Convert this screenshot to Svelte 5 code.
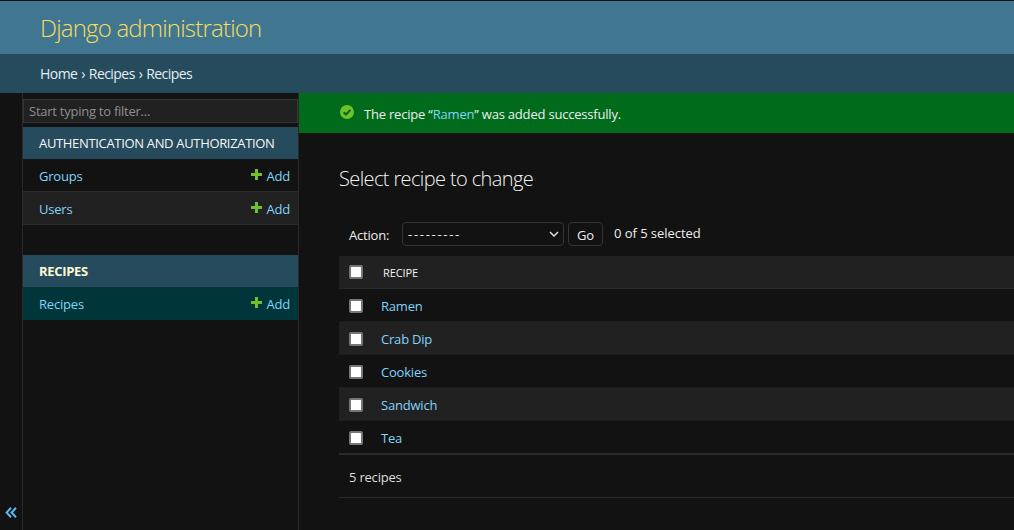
<script>
  const recipes = ['Ramen', 'Crab Dip', 'Cookies', 'Sandwich', 'Tea'];
</script>

<div class="page">
  <header class="header"><span class="brand">Django administration</span></header>
  <nav class="crumbs">Home › Recipes › Recipes</nav>
  <div class="body">
    <button class="toggle" aria-label="Toggle navigation">
      <svg width="12" height="11" viewBox="0 0 12 11"><path d="M6 .8 1.6 5.5 6 10.2M11 .8 6.6 5.5 11 10.2" fill="none" stroke="#56b9ef" stroke-width="2"/></svg>
    </button>
    <aside class="sidebar">
      <div class="filter-wrap"><div class="filter">Start typing to filter...</div></div>
      <section class="app">
        <h2 class="caption">AUTHENTICATION AND AUTHORIZATION</h2>
        {#each [{ name: 'Groups', cls: 'dark' }, { name: 'Users', cls: 'mid' }] as m}
          <div class="model {m.cls}">
            <a href="#x">{m.name}</a>
            <a href="#x" class="add"><svg width="11" height="11" viewBox="0 0 11 11"><path d="M4 0h3v4h4v3H7v4H4V7H0V4h4z" fill="#70bf2b"/></svg> Add</a>
          </div>
        {/each}
      </section>
      <section class="app second">
        <h2 class="caption bold">RECIPES</h2>
        <div class="model current">
          <a href="#x">Recipes</a>
          <a href="#x" class="add"><svg width="11" height="11" viewBox="0 0 11 11"><path d="M4 0h3v4h4v3H7v4H4V7H0V4h4z" fill="#70bf2b"/></svg> Add</a>
        </div>
      </section>
    </aside>
    <main class="main">
      <div class="message">
        <svg width="14" height="14" viewBox="0 0 14 14"><circle cx="7" cy="7" r="7" fill="#70bf2b"/><path d="M3.6 7.2 6 9.5l4.4-4.6" fill="none" stroke="#006b1b" stroke-width="2"/></svg>
        <span>The recipe “<a href="#x">Ramen</a>” was added successfully.</span>
      </div>
      <div class="content">
        <h1>Select recipe to change</h1>
        <div class="actions">
          <span class="label">Action:</span>
          <div class="select">
            <span>---------</span>
            <svg width="10" height="6" viewBox="0 0 10 6"><path d="M1 1l4 4 4-4" fill="none" stroke="#ddd" stroke-width="1.5"/></svg>
          </div>
          <div class="go">Go</div>
          <span class="counter">0 of 5 selected</span>
        </div>
        <div class="row head"><span class="box"></span><span class="th">RECIPE</span></div>
        {#each recipes as r, i}
          <div class="row" class:alt={i % 2 === 1} class:last={i === recipes.length - 1}><span class="box"></span><a href="#x">{r}</a></div>
        {/each}
        <p class="paginator">5 recipes</p>
      </div>
    </main>
  </div>
</div>

<style>
  :global(body) { margin: 0; background: #121212; }
  .page {
    width: 1014px; height: 530px; overflow: hidden; background: #121212;
    color: #eee; font-family: "Open Sans", sans-serif; font-size: 13px;
    letter-spacing: -0.2px;
    border-top: 1px solid #121212; box-sizing: border-box;
  }
  a { color: #81d4fa; text-decoration: none; }
  .header { height: 53px; background: #417690; display: flex; align-items: center; padding-left: 40px; }
  .brand { color: #f5dd5d; font-size: 24px; font-weight: 300; letter-spacing: -0.8px; }
  .crumbs { height: 39px; background: #264b5d; padding-left: 40px; line-height: 40px; color: #e4eef3; font-size: 14px; letter-spacing: -0.55px; word-spacing: 0.8px; }
  .body { display: flex; height: 437px; }
  .toggle {
    width: 23px; padding: 0 0 12px; background: #121212; border: 0; border-right: 1px solid #2a2a2a;
    display: flex; align-items: flex-end; justify-content: center; box-sizing: border-box;
  }
  .sidebar { width: 276px; flex: none; box-sizing: border-box; border-right: 1px solid #2a2a2a; }
  .filter-wrap { padding: 6px 0 4px; height: 34px; box-sizing: border-box; }
  .filter {
    height: 24px; box-sizing: border-box; border: 1px solid #353535; background: #212121;
    color: #8f8f8f; padding-left: 5px; line-height: 22px; font-size: 13px; letter-spacing: -0.25px;
  }
  .app.second { margin-top: 30px; }
  .caption {
    margin: 0; height: 32px; line-height: 33px; background: #264b5d; color: #f7f7f7;
    font-size: 13px; font-weight: 400; padding-left: 16px; letter-spacing: -0.33px;
  }
  .caption.bold { font-weight: 700; color: #fffbd5; letter-spacing: -0.3px; }
  .model {
    height: 33px; box-sizing: border-box; display: flex; justify-content: space-between;
    align-items: center; padding: 2px 8px 0 16px; border-bottom: 1px solid #2a2a2a;
  }
  .model.mid { background: #212121; }
  .model.current { background: #00363a; border-bottom: 0; padding-top: 0; }
  .add svg { vertical-align: 1px; margin-right: 1px; }
  .main { flex: 1; min-width: 0; }
  .message {
    height: 40px; background: #006b1b; display: flex; align-items: center; gap: 10px;
    padding-left: 41px; color: #eee; letter-spacing: -0.2px;
  }
  .message span { padding-top: 2px; }
  .message svg { margin-top: -2px; }
  .content { padding: 0 0 0 40px; }
  h1 { margin: 0; padding-top: 31px; height: 45px; font-size: 20px; line-height: 30px; font-weight: 300; color: #f2f2f2; letter-spacing: -0.62px; }
  .actions { display: flex; align-items: center; height: 47px; padding: 3px 0 0 10px; box-sizing: border-box; }
  .label { width: 53px; margin-top: 2px; }
  .select {
    width: 162px; height: 24px; box-sizing: border-box; border: 1px solid #353535; border-radius: 4px;
    display: flex; align-items: center; justify-content: space-between; padding: 0 4px 0 5px; letter-spacing: 1.7px;
  }
  .go {
    margin-left: 4px; width: 35px; height: 24px; box-sizing: border-box; border: 1px solid #353535; border-radius: 4px;
    text-align: center; line-height: 25px;
  }
  .counter { margin: -2px 0 0 11px; letter-spacing: -0.05px; }
  .row {
    height: 33px; box-sizing: border-box; display: flex; align-items: center;
    padding: 2px 0 0 10px; border-bottom: 1px solid #1d1d1d;
  }
  .row.head { background: #212121; border-bottom: 1px solid #2a2a2a; padding: 0 0 1px 10px; }
  .row.alt { background: #212121; }
  .row.last { border-bottom: 2px solid #2a2a2a; height: 34px; }
  .box {
    width: 14px; height: 14px; box-sizing: border-box; background: #fff; border: 2px solid #767676;
    border-radius: 2px; margin-right: 18px;
  }
  .th { font-size: 11px; color: #f2f2f2; margin: 1px 0 0 2px; letter-spacing: -0.1px; }
  .paginator { margin: 0; height: 42px; box-sizing: content-box; line-height: 44px; padding-left: 10px; border-bottom: 1px solid #2a2a2a; color: #ddd; }
</style>
